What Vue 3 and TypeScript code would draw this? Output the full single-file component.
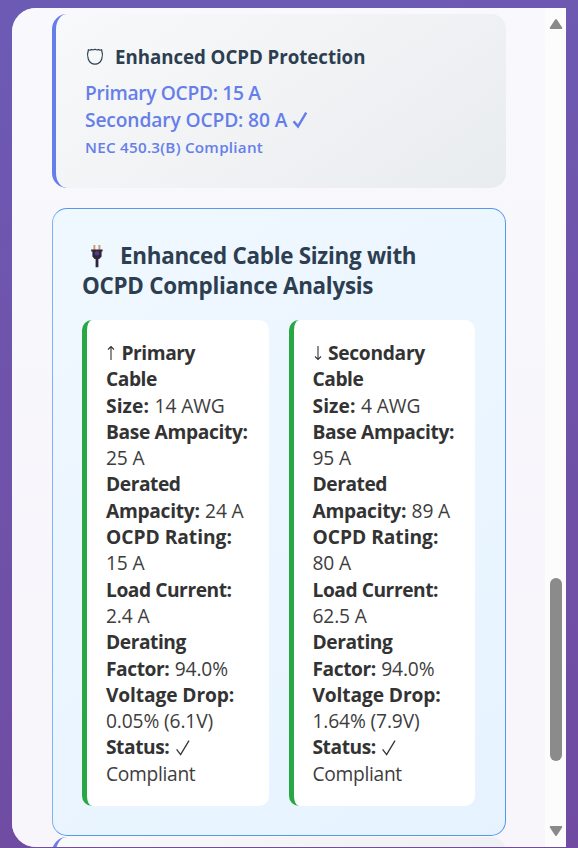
<script setup lang="ts">
interface Line {
  label?: string
  value?: string
  arrow?: 'up' | 'down'
  check?: boolean
}

function cableLines(name: string, arrow: 'up' | 'down', v: string[]): Line[] {
  return [
    { arrow, label: name },
    { label: 'Cable' },
    { label: 'Size:', value: v[0] },
    { label: 'Base Ampacity:' },
    { value: v[1] },
    { label: 'Derated' },
    { label: 'Ampacity:', value: v[2] },
    { label: 'OCPD Rating:' },
    { value: v[3] },
    { label: 'Load Current:' },
    { value: v[4] },
    { label: 'Derating' },
    { label: 'Factor:', value: v[5] },
    { label: 'Voltage Drop:' },
    { value: v[6] },
    { label: 'Status:', check: true },
    { value: 'Compliant' },
  ]
}

// Letter spacing in px for words that need looser or tighter setting.
const tracking: Record<string, number> = {
  'Size:': 0.1,
  'Base Ampacity:': -0.36,
  'Ampacity:': -0.3,
  'OCPD Rating:': -0.02,
  'Voltage Drop:': -0.12,
  'Secondary': -0.3,
  'Compliant': -0.3,
}

function spacing(text: string, base: number) {
  return { letterSpacing: `${tracking[text] ?? base}px` }
}

const cables: Line[][] = [
  cableLines('Primary', 'up', ['14 AWG', '25 A', '24 A', '15 A', '2.4 A', '94.0%', '0.05% (6.1V)']),
  cableLines('Secondary', 'down', ['4 AWG', '95 A', '89 A', '80 A', '62.5 A', '94.0%', '1.64% (7.9V)']),
]
</script>

<template>
  <div class="page">
    <div class="shell">
      <main class="content">
        <section class="card">
          <h3 class="card-title">
            <svg class="shield" viewBox="0 0 20 20" width="20" height="20">
              <path d="M3.4 3.8Q5.4 4.5 6.6 3.5Q8 4.3 10 3.2Q12 4.3 13.4 3.5Q14.6 4.5 16.6 3.8C18.6 9.5 17.2 17.9 10 18.2C2.8 17.9 1.4 9.5 3.4 3.8Z" />
            </svg>
            <span>Enhanced OCPD Protection</span>
          </h3>
          <div class="result primary">Primary OCPD: 15 A</div>
          <div class="result">
            <span>Secondary OCPD: 80 A</span>
            <svg class="check bold" viewBox="0 0 16 18" width="16" height="18"><path d="M1.6 10.4L6 15.4L14.2 1.6" /></svg>
          </div>
          <div class="note">NEC 450.3(B) Compliant</div>
        </section>

        <section class="panel">
          <h2 class="panel-title">
            <span class="first">
              <svg class="plug" viewBox="0 0 12 24" width="12" height="24">
                <path class="prong" d="M2.4 1h2v5h-2zM7.4 1h2v5h-2z" />
                <path class="body" d="M.2 5.4h11.4v2h-1v5L8.3 15H7.4v8.2H4.6V15h-1L1.4 12.4v-5H.2z" />
                <circle class="core" cx="6" cy="9.3" r="2.3" />
              </svg>
              <span>Enhanced Cable Sizing with</span>
            </span>
            <span>OCPD Compliance Analysis</span>
          </h2>
          <div class="cables">
            <article v-for="(lines, c) in cables" :key="c" class="cable">
              <div v-for="(line, i) in lines" :key="i" class="line">
                <svg v-if="line.arrow" class="arrow" :class="line.arrow" viewBox="0 0 10 16" width="10" height="16">
                  <path d="M5 15V1.5M2 4.5L5 1.5L8 4.5" />
                </svg>
                <b v-if="line.label" :style="spacing(line.label, -0.45)">{{ line.label }}</b>
                <span v-if="line.value" :style="spacing(line.value, -0.13)">{{ line.value }}</span>
                <svg v-if="line.check" class="check" viewBox="0 0 16 18" width="16" height="18"><path d="M1.6 10.4L5.6 15.6L14 1.6" /></svg>
              </div>
            </article>
          </div>
        </section>

        <section class="card next"></section>
      </main>
      <aside class="scrollbar">
        <svg viewBox="0 0 14 12" width="14" height="12"><path d="M7 2L12.3 10H1.7Z" /></svg>
        <div class="thumb"></div>
        <svg class="down" viewBox="0 0 14 12" width="14" height="12"><path d="M7 2L12.3 10H1.7Z" /></svg>
      </aside>
    </div>
  </div>
</template>

<style>
body {
  overflow: hidden;
}
</style>

<style scoped>
* {
  box-sizing: border-box;
}
.page {
  height: 848px;
  padding: 8px 12px 1px;
  background: linear-gradient(170deg, #6c5bb5 0%, #6f54ac 35%, #704ba1 100%);
  font-family: "Open Sans", "Noto Sans", sans-serif;
  color: #333;
}
.shell {
  display: flex;
  height: 839px;
  border-radius: 24px 0 0 24px;
  overflow: hidden;
  background: #f8f6fc;
}
.content {
  width: 533px;
  padding: 6px 39px 0 40px;
  background: linear-gradient(180deg, #f8f8fd, #f8f5fb);
}
.card {
  height: 174px;
  padding: 27px 29px;
  border-left: 4px solid #667eea;
  border-radius: 15px;
  background: linear-gradient(145deg, #f8f9fa, #e9ecef);
}
.card.next {
  margin-top: 1px;
}
.card-title {
  display: flex;
  align-items: center;
  gap: 10px;
  height: 30px;
  margin: 0 0 8px;
  color: #2c3e50;
  font-size: 18.7px;
  font-weight: 700;
  white-space: nowrap;
  letter-spacing: -0.04px;
}
.shield {
  fill: none;
  stroke: #2c3e50;
  stroke-width: 1.2;
}
.result {
  display: flex;
  align-items: center;
  gap: 5px;
  height: 27px;
  color: #667eea;
  font-size: 19.2px;
  font-weight: 600;
  line-height: 27px;
  white-space: nowrap;
  letter-spacing: -0.12px;
}
.result.primary {
  letter-spacing: -0.32px;
}
.note {
  height: 27px;
  padding-top: 1px;
  color: #667eea;
  font-size: 15.2px;
  font-weight: 600;
  line-height: 27px;
  letter-spacing: 0.27px;
}
.check {
  flex: none;
  fill: none;
  stroke: currentColor;
  stroke-width: 1.3;
}
.check.bold {
  stroke-width: 2.4;
}
.panel {
  height: 628px;
  margin-top: 20px;
  padding: 32px 30px 0 29px;
  border: 1px solid #5499e8;
  border-left-color: #7fb2f2;
  border-radius: 15px;
  background: linear-gradient(145deg, #f0f8ff, #e6f3ff);
}
.panel-title {
  display: flex;
  flex-direction: column;
  margin: 0 0 19px;
  color: #2c3e50;
  font-size: 22.4px;
  font-weight: 700;
  line-height: 30px;
  white-space: nowrap;
  letter-spacing: -0.27px;
}
.first {
  display: flex;
  align-items: center;
  gap: 17px;
  padding-left: 9px;
}
.prong {
  fill: #d39a6c;
}
.body {
  fill: #30243c;
}
.core {
  fill: #523d7c;
}
.cables {
  display: grid;
  grid-template-columns: 1fr 1fr;
  gap: 20px;
}
.cable {
  height: 485.5px;
  padding: 20px 19px;
  border-left: 5px solid #28a745;
  border-radius: 10px;
  background: #fff;
}
.line {
  display: flex;
  align-items: center;
  gap: 5.5px;
  height: 26.3px;
  font-size: 19.2px;
  line-height: 26.3px;
  white-space: nowrap;
}
.line span {
  color: #3d3d3d;
}
.arrow {
  flex: none;
  fill: none;
  stroke: #333;
  stroke-width: 1.1;
}
.arrow.down {
  transform: rotate(180deg);
}
.scrollbar {
  display: flex;
  flex-direction: column;
  align-items: center;
  justify-content: space-between;
  width: 21px;
  padding: 10px 0 10px;
  background: #fcfcfc;
}
.scrollbar path {
  fill: #8a8a8a;
  stroke: #8a8a8a;
  stroke-width: 2;
  stroke-linejoin: round;
}
.down {
  transform: rotate(180deg);
}
.thumb {
  width: 12px;
  height: 183px;
  margin-top: 483px;
  border-radius: 6px;
  background: #8b8b8b;
}
</style>
